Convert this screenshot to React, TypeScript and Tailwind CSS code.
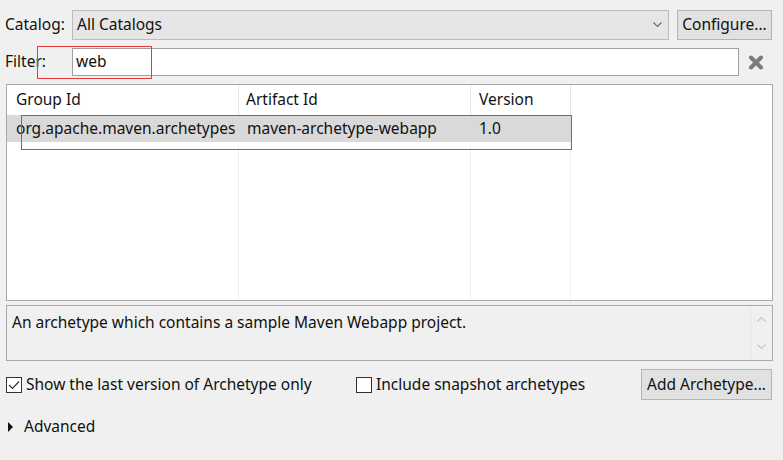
import React from "react";

function Chevron({ dir, color, className }: { dir: "up" | "down"; color: string; className?: string }) {
  return (
    <svg width="9" height="6" viewBox="0 0 9 6" className={className}>
      {dir === "down" ? (
        <polyline points="0.5,0.5 4.5,4.5 8.5,0.5" fill="none" stroke={color} strokeWidth="1.1" />
      ) : (
        <polyline points="0.5,5.5 4.5,1.5 8.5,5.5" fill="none" stroke={color} strokeWidth="1.1" />
      )}
    </svg>
  );
}

function Checkbox({ checked }: { checked: boolean }) {
  return (
    <div className="w-[16px] h-[16px] border border-[#333333] bg-white flex items-center justify-center shrink-0">
      {checked && (
        <svg width="12" height="10" viewBox="0 0 12 10">
          <polyline points="1,5 4.5,8.5 11,1.5" fill="none" stroke="#333333" strokeWidth="1.2" />
        </svg>
      )}
    </div>
  );
}

export default function App() {
  return (
    <div
      className="relative w-[783px] h-[460px] bg-[#f0f0f0] text-[15.5px] text-[#111111] overflow-hidden pt-[10px]"
      style={{ fontFamily: '"Noto Sans", "Open Sans", sans-serif' }}
    >
      {/* Catalog row */}
      <div className="flex items-center h-[30px]">
        <div className="w-[72px] pl-[5px] leading-none">Catalog:</div>
        <div className="w-[597px] h-[30px] border border-[#bcbcbc] bg-[#e6e6e6] flex items-center pl-[4px] pr-[6px]">
          <span className="flex-1 leading-none">All Catalogs</span>
          <Chevron dir="down" color="#6a6a6a" />
        </div>
        <div className="ml-[8px] w-[95px] h-[30px] border border-[#b4b4b4] bg-[#e1e1e1] flex items-center justify-center leading-none">
          Configure...
        </div>
      </div>

      {/* Filter row */}
      <div className="flex items-center mt-[8px] h-[28px]">
        <div className="w-[72px] pl-[5px] leading-none">Filter:</div>
        <div className="w-[667px] h-[28px] border border-[#a0a0a0] bg-white flex items-center pl-[3px] leading-none">
          web
        </div>
        <div className="flex-1 flex items-center justify-center pr-[10px]">
          <svg width="16" height="15" viewBox="0 0 16 15">
            <line x1="3" y1="2.5" x2="13" y2="12.5" stroke="#7c7c7c" strokeWidth="4" strokeLinecap="round" />
            <line x1="13" y1="2.5" x2="3" y2="12.5" stroke="#7c7c7c" strokeWidth="4" strokeLinecap="round" />
          </svg>
        </div>
      </div>

      {/* Table */}
      <div className="ml-[6px] mt-[8px] w-[767px] h-[217px] border border-[#a9a9a9] bg-white relative overflow-hidden">
        <div className="flex h-[30px] items-center">
          <div className="w-[232px] h-full flex items-center pl-[9px] border-r border-[#e5e5e5] leading-none">Group Id</div>
          <div className="w-[232px] h-full flex items-center pl-[7px] border-r border-[#e5e5e5] leading-none">Artifact Id</div>
          <div className="w-[100px] h-full flex items-center pl-[8px] border-r border-[#e5e5e5] leading-none">Version</div>
          <div className="flex-1" />
        </div>
        <div className="flex h-[27px] items-center">
          <div className="w-[564px] h-full bg-[#d9d9d9] flex items-center">
            <div className="w-[232px] pl-[9px] leading-none">org.apache.maven.archetypes</div>
            <div className="w-[232px] pl-[8px] leading-none">maven-archetype-webapp</div>
            <div className="w-[100px] pl-[8px] leading-none">1.0</div>
          </div>
        </div>
        <div className="flex h-[160px]">
          <div className="w-[232px] h-full border-r border-[#eef2f8]" />
          <div className="w-[232px] h-full border-r border-[#eef2f8]" />
          <div className="w-[100px] h-full border-r border-[#eef2f8]" />
        </div>
      </div>

      {/* Description */}
      <div className="ml-[6px] mt-[4px] w-[767px] h-[56px] border border-[#a9a9a9] bg-[#f0f0f0] flex">
        <div className="flex-1 pl-[5px] pt-[7px] leading-[18px]">
          An archetype which contains a sample Maven Webapp project.
        </div>
        <div className="w-[22px] h-full border-l border-[#e6e6e6] flex flex-col items-center justify-between py-[10px]">
          <Chevron dir="up" color="#c4c4c4" />
          <Chevron dir="down" color="#c4c4c4" />
        </div>
      </div>

      {/* Checkbox row */}
      <div className="flex items-center mt-[8px] h-[31px]">
        <div className="ml-[6px] flex items-center">
          <Checkbox checked />
          <span className="ml-[4px] leading-none">Show the last version of Archetype only</span>
        </div>
        <div className="absolute left-[356px] flex items-center">
          <Checkbox checked={false} />
          <span className="ml-[4px] leading-none">Include snapshot archetypes</span>
        </div>
        <div className="ml-auto mr-[11px] w-[131px] h-[31px] border border-[#b4b4b4] bg-[#e1e1e1] flex items-center justify-center leading-none">
          Add Archetype...
        </div>
      </div>

      {/* Advanced */}
      <div className="flex items-center mt-[18px] h-[18px]">
        <svg width="6" height="10" viewBox="0 0 6 10" className="ml-[8px]">
          <polygon points="0,0 5,5 0,10" fill="#111111" />
        </svg>
        <span className="ml-[10px] leading-none">Advanced</span>
      </div>

      {/* Red annotation boxes */}
      <div className="absolute left-[37px] top-[46px] w-[115px] h-[33px] border border-[#e83a3a] pointer-events-none" />
      <div className="absolute left-[21px] top-[115px] w-[551px] h-[35px] border border-[#e83a3a] pointer-events-none" />
    </div>
  );
}
